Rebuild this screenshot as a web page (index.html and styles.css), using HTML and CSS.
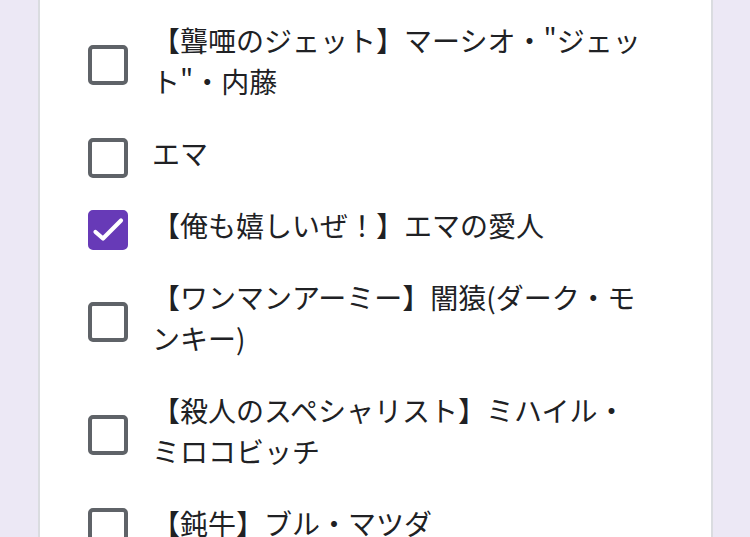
FILE: index.html
```html
<!DOCTYPE html>
<html lang="ja">
<head>
<meta charset="utf-8">
<link rel="stylesheet" href="styles.css">
</head>
<body>
<div class="card">
  <ul class="options">
    <li class="option">
      <span class="box"></span>
      <span class="label">【聾唖のジェット】マーシオ・"ジェット"・内藤</span>
    </li>
    <li class="option">
      <span class="box"></span>
      <span class="label">エマ</span>
    </li>
    <li class="option">
      <span class="box checked"><svg viewBox="0 0 40 40" width="40" height="40"><path d="M7.5 22 L15 28.5 L33 10.5" fill="none" stroke="#fff" stroke-width="4.2" stroke-linecap="round" stroke-linejoin="round"/></svg></span>
      <span class="label">【俺も嬉しいぜ！】エマの愛人</span>
    </li>
    <li class="option">
      <span class="box"></span>
      <span class="label">【ワンマンアーミー】闇猿(ダーク・モンキー)</span>
    </li>
    <li class="option">
      <span class="box"></span>
      <span class="label">【殺人のスペシャリスト】ミハイル・ミロコビッチ</span>
    </li>
    <li class="option">
      <span class="box"></span>
      <span class="label">【鈍牛】ブル・マツダ</span>
    </li>
  </ul>
</div>
</body>
</html>
```
FILE: styles.css
```css
html, body {
  margin: 0;
  padding: 0;
  height: 100%;
  background: #ece8f5;
  overflow: hidden;
}
body {
  font-family: "Noto Sans CJK JP", "Noto Sans", sans-serif;
  color: #202124;
}
.card {
  margin-left: 38px;
  width: 671px;
  height: 100%;
  background: #fff;
  border-left: 2px solid #dadce0;
  border-right: 2px solid #dadce0;
  padding-top: 5px;
}
.options {
  list-style: none;
  margin: 0;
  padding: 0 0 0 48px;
}
.option {
  display: flex;
  align-items: center;
  gap: 24px;
  padding: 15px 0 16px;
}
.box {
  flex: none;
  box-sizing: border-box;
  width: 40px;
  height: 40px;
  border: 4px solid #5f6368;
  border-radius: 5px;
  position: relative;
  top: 4px;
}
.box.checked {
  background: #673ab7;
  border-color: #673ab7;
}
.box svg {
  position: absolute;
  left: -4px;
  top: -4px;
}
.label {
  width: 500px;
  font-size: 28px;
  line-height: 41px;
}
```
